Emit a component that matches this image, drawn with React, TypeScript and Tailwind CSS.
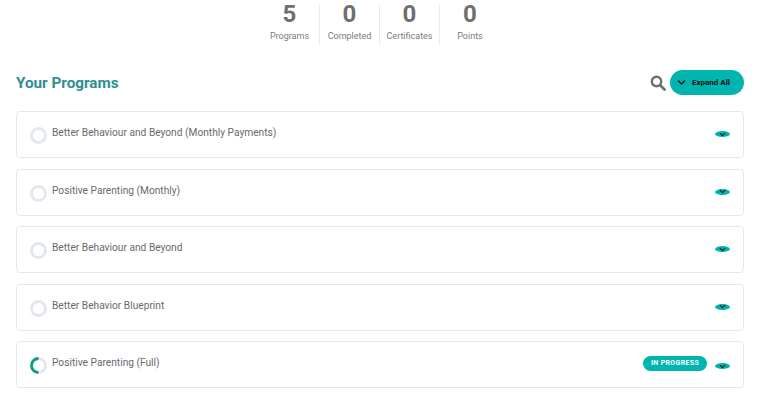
import React from "react";

const font = { fontFamily: "Roboto, sans-serif" };

function Stat({ value, label, last }: { value: string; label: string; last?: boolean }) {
  return (
    <div className={`w-[60px] h-[41px] flex flex-col items-center ${last ? "" : "border-r border-[#e8edf2]"}`}>
      <div className="text-[24px] leading-[18px] font-bold text-[#6f6f6f] mt-[1px]">{value}</div>
      <div className="text-[9px] leading-[12px] mt-[7px] text-[#777b80]">{label}</div>
    </div>
  );
}

function Chevron({ size, className }: { size: number; className?: string }) {
  return (
    <svg width={size} height={size} viewBox="0 0 12 12" className={className} fill="none">
      <path d="M2 4l4 4 4-4" stroke="#111" strokeWidth="1.8" strokeLinecap="round" strokeLinejoin="round" />
    </svg>
  );
}

function Ring({ progress }: { progress?: boolean }) {
  return (
    <svg width="17" height="17" viewBox="0 0 18 18" className="mt-[7px] shrink-0">
      <circle cx="9" cy="9" r="7.4" fill="none" stroke="#e2e7ee" strokeWidth="3" />
      {progress && (
        <path d="M9 1.6A7.4 7.4 0 0 0 9 16.4" fill="none" stroke="#0a9b83" strokeWidth="3" />
      )}
    </svg>
  );
}

function Card({ title, progress }: { title: string; progress?: boolean }) {
  return (
    <div className="h-[47px] rounded-[4px] border border-[#e3e8ef] bg-white pl-[13px] pr-[13px] pt-[8px] flex items-start">
      <Ring progress={progress} />
      <div className="ml-[5px] mt-[6px] text-[10.2px] leading-[14px] text-[#666a6f]">{title}</div>
      <div className="ml-auto flex items-center mt-[5px]">
        {progress && (
          <div className="h-[15px] w-[64px] rounded-full bg-[#00b5b0] text-white text-[7px] font-bold tracking-[0.35px] flex items-center justify-center mr-[8px] mt-[1px]">
            IN PROGRESS
          </div>
        )}
        <div className="w-[15px] h-[6px] rounded-[50%] bg-[#00b5b0] flex items-center justify-center mt-[6px]">
          <Chevron size={7} />
        </div>
      </div>
    </div>
  );
}

export default function App() {
  return (
    <div className="w-[768px] h-[406px] overflow-hidden bg-white pl-4 pr-6" style={font}>
      <div className="flex justify-center pl-[1px] pt-[4px] ml-[-1px]">
        <Stat value="5" label="Programs" />
        <Stat value="0" label="Completed" />
        <Stat value="0" label="Certificates" />
        <Stat value="0" label="Points" last />
      </div>
      <div className="flex items-center mt-[25px] h-[25px]">
        <h2 className="text-[15.25px] font-bold text-[#2e8f92] mt-[2px]">Your Programs</h2>
        <svg width="16" height="16" viewBox="0 0 16 16" className="ml-auto" fill="none">
          <circle cx="6.5" cy="6.5" r="4.7" stroke="#6f6f6f" strokeWidth="2.4" />
          <path d="M10 10l4.5 4.5" stroke="#6f6f6f" strokeWidth="2.8" strokeLinecap="round" />
        </svg>
        <button className="ml-[4px] w-[74px] h-[25px] rounded-full bg-[#00b5b0] flex items-center pl-[7px] text-[8px] font-bold text-[#111]">
          <Chevron size={9} />
          <span className="ml-[6px]">Expand All</span>
        </button>
      </div>
      <div className="mt-[16px] flex flex-col gap-[10.5px]">
        <Card title="Better Behaviour and Beyond (Monthly Payments)" />
        <Card title="Positive Parenting (Monthly)" />
        <Card title="Better Behaviour and Beyond" />
        <Card title="Better Behavior Blueprint" />
        <Card title="Positive Parenting (Full)" progress />
      </div>
    </div>
  );
}
